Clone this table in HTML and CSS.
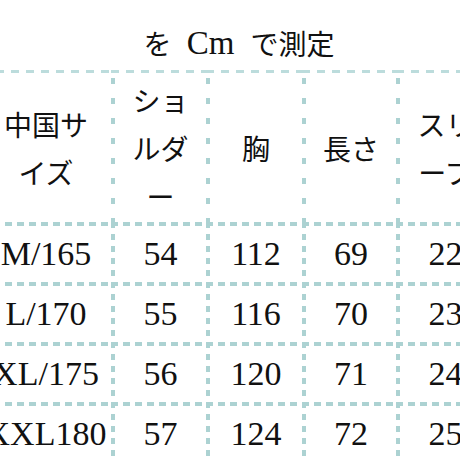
FILE: index.html
```html
<!DOCTYPE html>
<html lang="ja">
<head>
<meta charset="utf-8">
<link rel="stylesheet" href="styles.css">
</head>
<body>
<div class="page">
  <div class="sheet">
    <h1 class="title"><span class="ja lead">を</span> Cm <span class="ja tail">で測定</span></h1>
    <div class="grid">
      <div class="cell head">中国サイズ</div>
      <div class="cell head col">ショルダー</div>
      <div class="cell head col">胸</div>
      <div class="cell head col">長さ</div>
      <div class="cell head col">スリーブ</div>

      <div class="cell row">M/165</div>
      <div class="cell row col">54</div>
      <div class="cell row col">112</div>
      <div class="cell row col">69</div>
      <div class="cell row col">22</div>

      <div class="cell row">L/170</div>
      <div class="cell row col">55</div>
      <div class="cell row col">116</div>
      <div class="cell row col">70</div>
      <div class="cell row col">23</div>

      <div class="cell row">XL/175</div>
      <div class="cell row col">56</div>
      <div class="cell row col">120</div>
      <div class="cell row col">71</div>
      <div class="cell row col">24</div>

      <div class="cell row">XXL180</div>
      <div class="cell row col">57</div>
      <div class="cell row col">124</div>
      <div class="cell row col">72</div>
      <div class="cell row col">25</div>
    </div>
  </div>
</div>
</body>
</html>
```
FILE: styles.css
```css
html, body {
  margin: 0;
  padding: 0;
  background: #ffffff;
}

.page {
  width: 460px;
  height: 460px;
  overflow: hidden;
  background: #ffffff;
}

.sheet {
  width: 510px;
  margin-left: -19px;
  color: #111111;
  font-family: "Liberation Serif", "Noto Sans CJK JP", serif;
}

.title {
  margin: 0;
  height: 70px;
  box-sizing: border-box;
  padding: 16px 0 0 6px;
  display: flex;
  align-items: center;
  justify-content: center;
  font-size: 33px;
  font-weight: normal;
  white-space: pre;
  line-height: 1;
}

.ja {
  font-family: "Noto Sans CJK JP", sans-serif;
  font-size: 28px;
}

.lead {
  margin-right: 7px;
}

.tail {
  margin-left: 8px;
}

.grid {
  display: grid;
  grid-template-columns: 130px 95px 96px 94px 95px;
  grid-template-rows: 152px repeat(4, 60px);
}

.cell {
  display: flex;
  align-items: center;
  justify-content: center;
  text-align: center;
  box-sizing: border-box;
  background-repeat: no-repeat;
}

.head {
  font-family: "Noto Sans CJK JP", sans-serif;
  font-size: 28px;
  line-height: 48px;
  line-break: loose;
  padding: 3px 12px 0 12px;
  background-image: repeating-linear-gradient(to right, #bcdcdc 0 8px, transparent 8px 15px);
  background-size: 100% 3px;
  background-position: left top;
}

.row {
  font-size: 34px;
  padding: 4px 0 0 0;
  background-image: repeating-linear-gradient(to right, #acd2d2 0 7px, transparent 7px 12px);
  background-size: 100% 4px;
  background-position: left top;
}

.head.col {
  padding-left: 16px;
  background-image:
    repeating-linear-gradient(to right, #bcdcdc 0 8px, transparent 8px 15px),
    repeating-linear-gradient(to bottom, transparent 0 8px, #acd2d2 8px 14px, transparent 14px 20px);
  background-size: 100% 3px, 4px 100%;
  background-position: left top, left top;
}

.row.col {
  padding-left: 4px;
  background-image:
    repeating-linear-gradient(to right, #acd2d2 0 7px, transparent 7px 12px),
    repeating-linear-gradient(to bottom, #acd2d2 0 6px, transparent 6px 12px);
  background-size: 100% 4px, 4px 100%;
  background-position: left top, left top;
}
```
